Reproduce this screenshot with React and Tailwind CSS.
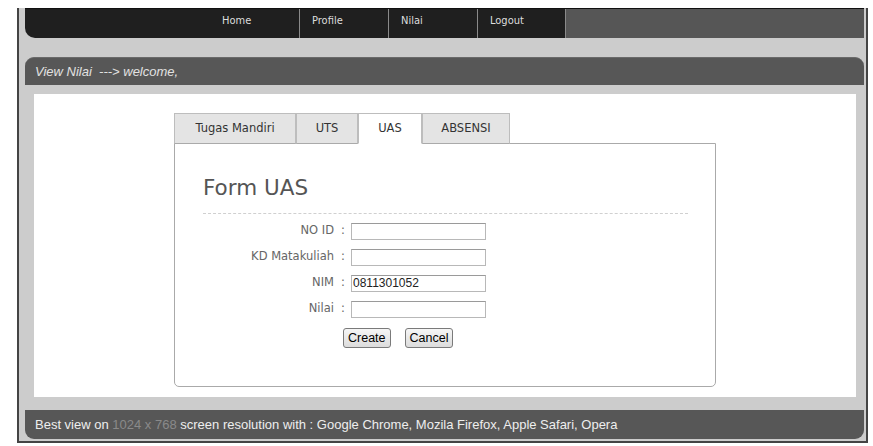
import React from "react";

const tahoma = { fontFamily: '"DejaVu Sans Condensed", "DejaVu Sans", sans-serif' };
const dvs = { fontFamily: '"DejaVu Sans", sans-serif' };

function NavItem({ label, first, last }) {
  return (
    <div
      className={`w-[89px] h-full pl-[12px] pt-[5px] text-[11px] leading-[14px] text-[#dddddd] bg-[#1f1f1f] ${first ? "" : "border-l border-[#8a8a8a]"} ${last ? "border-r border-[#8a8a8a]" : ""}`}
      style={tahoma}
    >
      {label}
    </div>
  );
}

function Row({ label, value }) {
  return (
    <div className="flex items-center h-[26px]">
      <div className="w-[160px] text-right text-[11.5px] text-[#666666] pr-[1px]" style={dvs}>
        {label}
      </div>
      <div className="w-[16px] text-center text-[11.5px] text-[#666666]" style={dvs}>
        :
      </div>
      <input
        readOnly
        value={value || ""}
        className="w-[135px] h-[17px] border border-[#b8b8b8] border-t-[#9a9a9a] bg-white px-[1px] text-[12px] text-[#222222] outline-none font-['Liberation_Sans',Arial,sans-serif]"
      />
    </div>
  );
}

export default function App() {
  const tabs = [
    { label: "Tugas Mandiri", w: "w-[122px]" },
    { label: "UTS", w: "w-[62px]" },
    { label: "UAS", w: "w-[64px]", active: true },
    { label: "ABSENSI", w: "w-[88px]" },
  ];
  return (
    <div className="w-[873px] h-[446px] bg-white overflow-hidden pt-[8px] pl-[17px]">
      <div className="w-[851px] h-[435px] bg-[#cccccc] border-x-2 border-b-2 border-[#444444] flex flex-col">
        {/* Nav */}
        <div className="ml-[6px] w-[839px] h-[30px] flex border-t border-[#111111]">
          <div className="w-[185px] h-full bg-[#1f1f1f] rounded-bl-[10px]" />
          <NavItem label="Home" first />
          <NavItem label="Profile" />
          <NavItem label="Nilai" />
          <NavItem label="Logout" last />
          <div className="flex-1 h-full bg-[#565656]" />
        </div>

        {/* Title bar */}
        <div className="ml-[6px] mt-[19px] w-[839px] h-[28px] bg-[#575757] rounded-t-[9px] border-t border-[#6a6a6a] flex items-center pl-[10px]">
          <span className="italic text-[13px] text-[#e2e2e2] whitespace-pre font-['Liberation_Sans',Arial,sans-serif]">
            {"View Nilai  ---> welcome,"}
          </span>
        </div>

        {/* White content */}
        <div className="ml-[15px] mt-[9px] w-[822px] h-[303px] bg-white pt-[19px] pl-[140px]">
          <div className="flex relative z-10">
            {tabs.map((t) => (
              <div
                key={t.label}
                className={`${t.w} h-[31px] flex items-center justify-center text-[11.5px] text-[#333333] border border-[#bdbdbd] ${t.active ? "bg-white border-b-white" : "bg-[#e4e4e4] border-b-[#aaaaaa]"}`}
                style={dvs}
              >
                {t.label}
              </div>
            ))}
          </div>
          <div className="w-[542px] h-[244px] -mt-px border border-[#aaaaaa] rounded-b-[5px] bg-white">
            <div className="pl-[28px] pt-[31px]">
              <div className="text-[21.5px] leading-[26px] text-[#555555]" style={dvs}>
                Form UAS
              </div>
              <div className="mt-[12px] w-[485px] border-t border-dashed border-[#d0d0d0]" />
            </div>
            <div className="mt-[4px]">
              <Row label="NO ID" />
              <Row label="KD Matakuliah" />
              <Row label="NIM" value="0811301052" />
              <Row label="Nilai" />
              <div className="flex gap-[14px] pl-[168px] mt-[6px]">
                <button className="h-[20px] px-[4px] rounded-[3px] border border-[#7a7a7a] bg-gradient-to-b from-[#f6f6f6] to-[#dcdcdc] text-[12.5px] text-black font-['Liberation_Sans',Arial,sans-serif]">
                  Create
                </button>
                <button className="h-[20px] px-[4px] rounded-[3px] border border-[#7a7a7a] bg-gradient-to-b from-[#f6f6f6] to-[#dcdcdc] text-[12.5px] text-black font-['Liberation_Sans',Arial,sans-serif]">
                  Cancel
                </button>
              </div>
            </div>
          </div>
        </div>

        {/* Footer */}
        <div className="ml-[6px] mt-[13px] w-[839px] h-[29px] bg-[#575757] rounded-b-[9px] flex items-center pl-[10px]">
          <span className="text-[13px] text-[#eeeeee] font-['Liberation_Sans',Arial,sans-serif] whitespace-pre">
            Best view on <span className="text-[#8a8a8a]">1024 x 768</span> screen resolution with : Google Chrome, Mozila Firefox, Apple Safari, Opera
          </span>
        </div>
      </div>
    </div>
  );
}
